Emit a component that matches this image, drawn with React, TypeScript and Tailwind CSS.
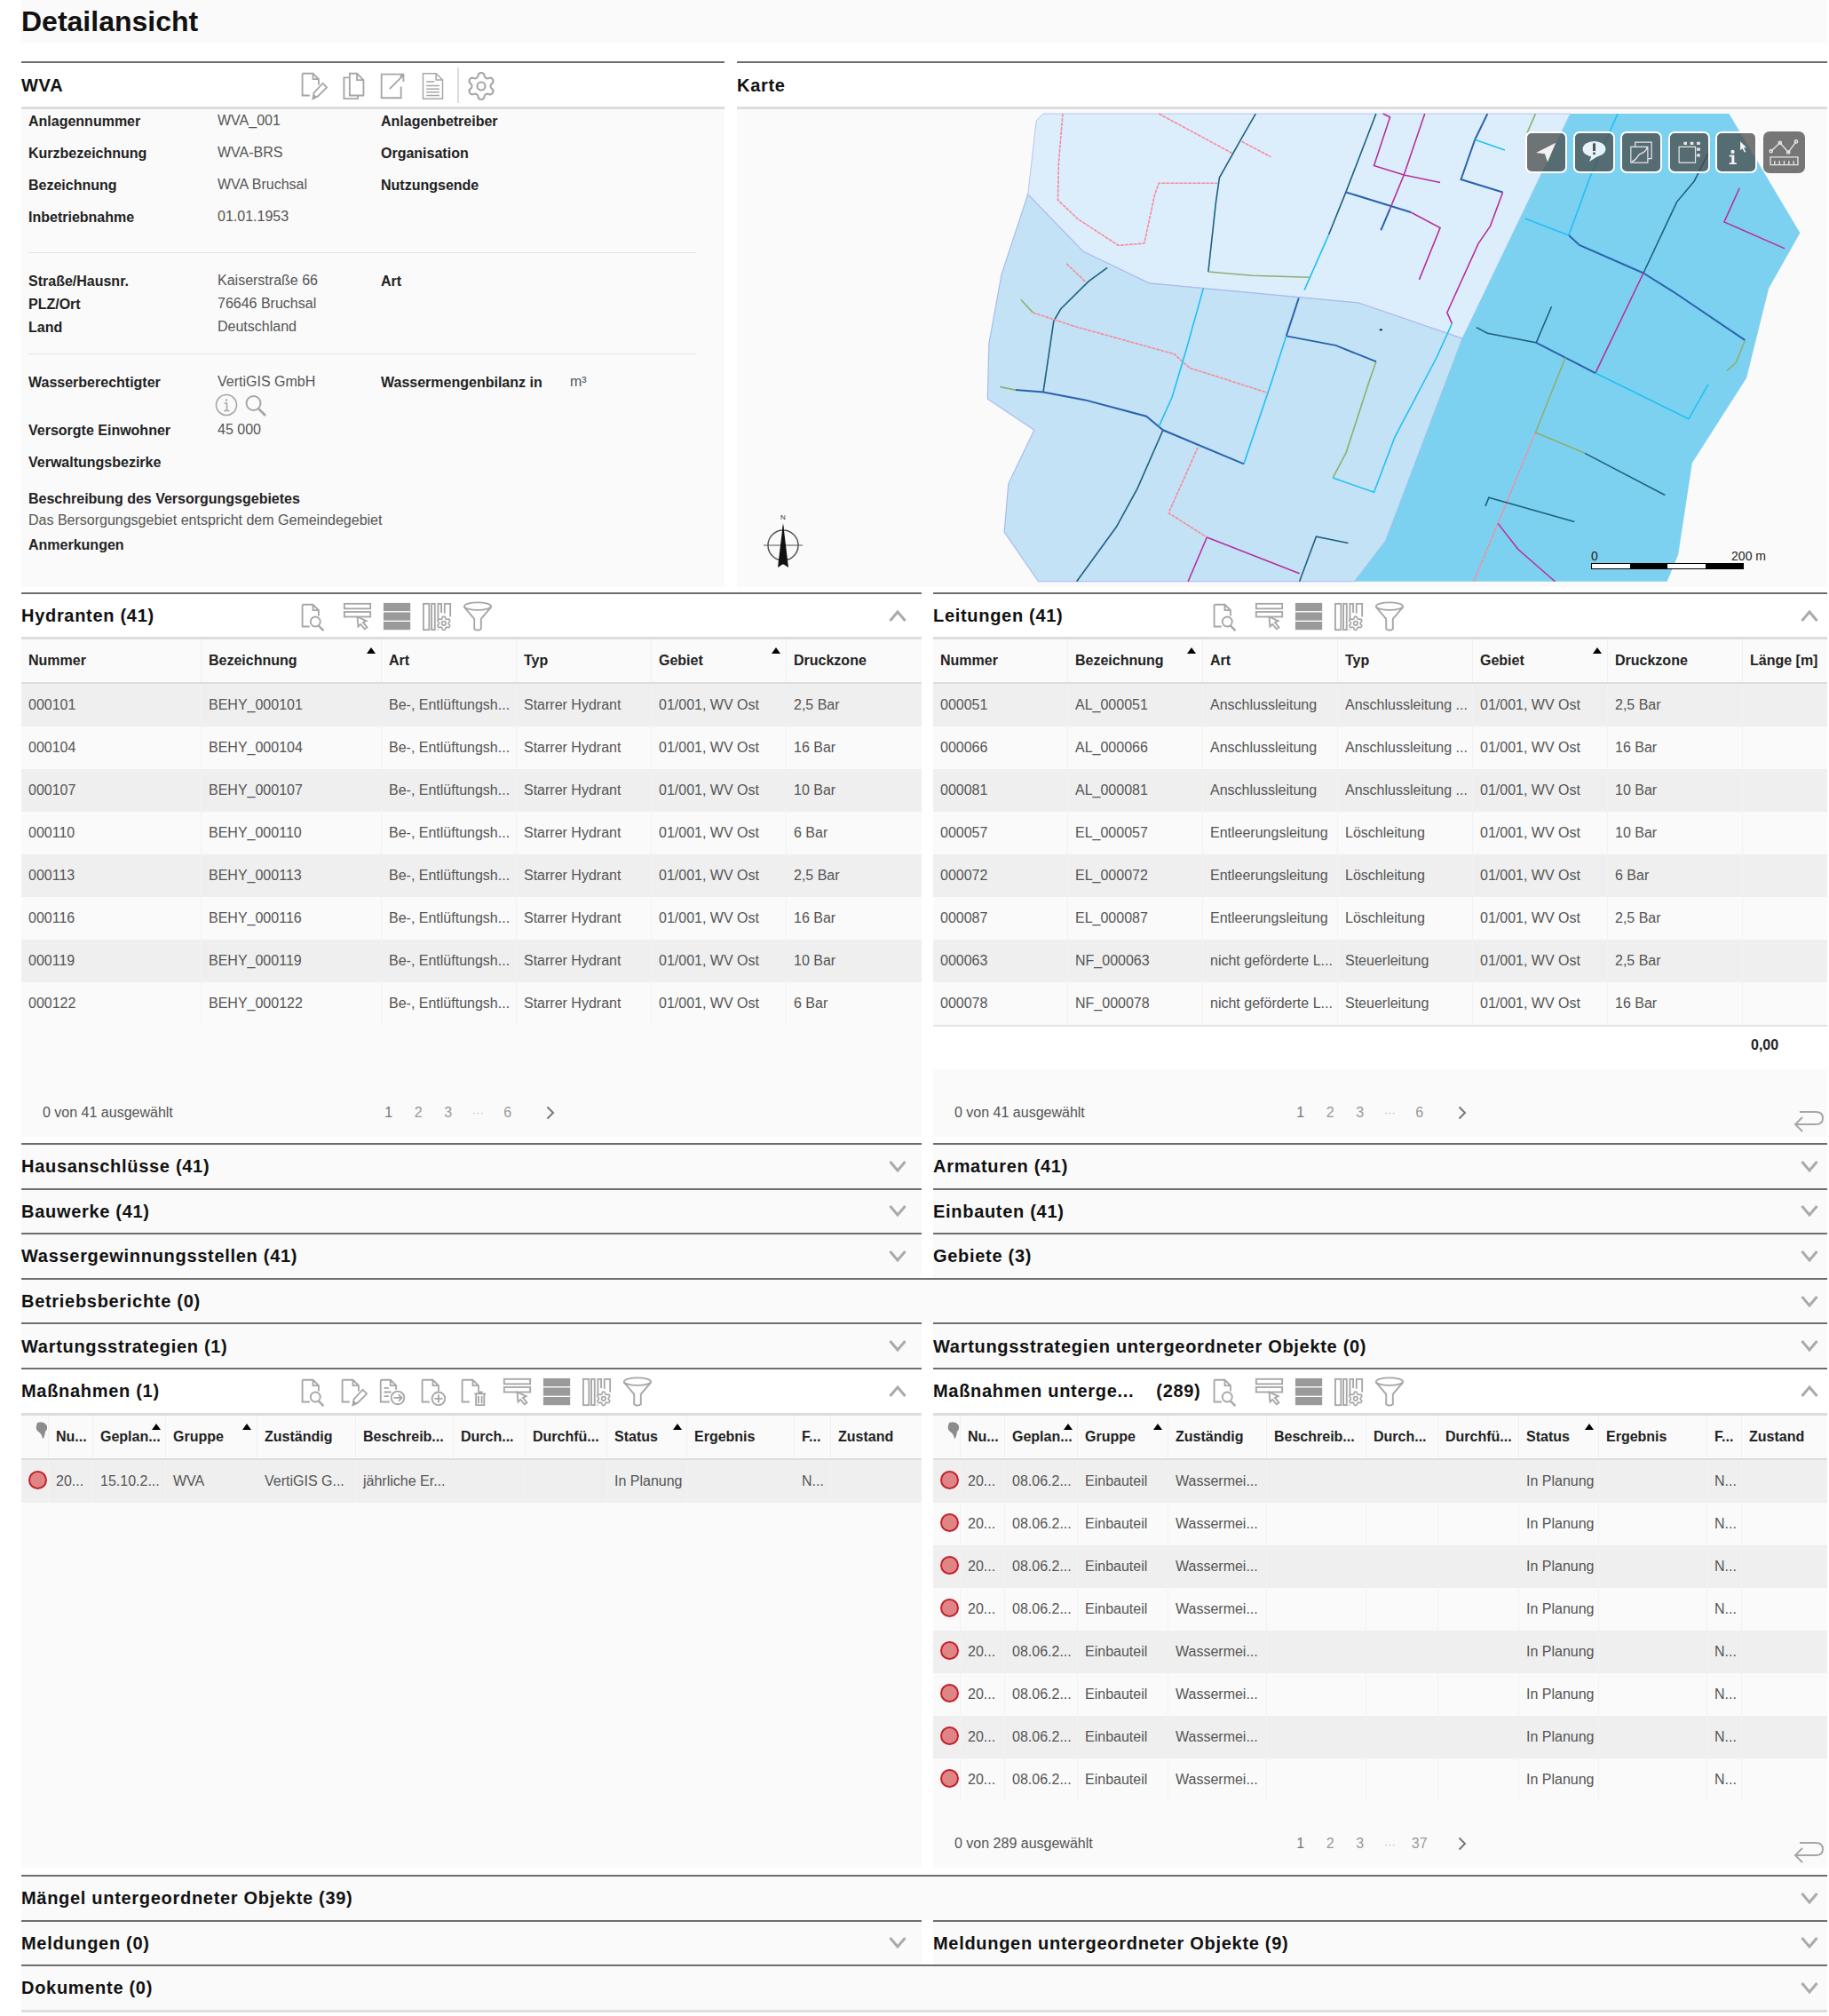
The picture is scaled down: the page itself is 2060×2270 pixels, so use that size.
import React from "react";
import { Settings } from "lucide-react";

const GREY = "#a6a6a6";

type Col = { label: string; w: string; sort?: string };

// icon boxes in the grey toolbar, drawn in a 36x36 box
const Page = () => (
  <path d="M5 3h13l7 7v7M18 3v7h7M5 3v27h9" fill="none" stroke={GREY} strokeWidth="2" />
);

const Svg = ({ children }: { children: React.ReactNode }) => (
  <svg viewBox="0 0 36 36" className="w-[33px] h-[33px]" fill="none" stroke={GREY} strokeWidth="2">
    {children}
  </svg>
);

const DocSearch = () => (
  <Svg>
    <Page />
    <circle cx="21" cy="24" r="6" />
    <path d="M25 29l6 6" strokeWidth="2.5" />
  </Svg>
);
const DocEdit = () => (
  <Svg>
    <Page />
    <path d="M18 34l1-7 11-12 5 5-11 11z" />
    <path d="M18 34l3-4" strokeWidth="3" />
  </Svg>
);
const DocMove = () => (
  <Svg>
    <path d="M3 3h12l7 7v5M15 3v7h7M3 3v27h11M7 13h6M7 18h9M7 23h6" />
    <circle cx="24" cy="25" r="8" />
    <path d="M19 25h10M25 21l4 4-4 4" />
  </Svg>
);
const DocAdd = () => (
  <Svg>
    <Page />
    <circle cx="25" cy="26" r="8" />
    <path d="M25 21v10M20 26h10" />
  </Svg>
);
const DocTrash = () => (
  <Svg>
    <Page />
    <path d="M20 20h14M25 20v-2h4v2M22 20v14h10V20M25 23v9M29 23v9" />
  </Svg>
);
const SelectRow = () => (
  <Svg>
    <rect x="2" y="2" width="32" height="6" />
    <rect x="2" y="12" width="32" height="6" />
    <path d="M18 18l11 5-4 2 5 6-3 2-5-6-3 3z" fill="#fff" />
  </Svg>
);
const RowsSolid = () => (
  <Svg>
    <rect x="1" y="1" width="33" height="10" fill="#9a9a9a" stroke="none" />
    <rect x="1" y="12.5" width="33" height="10" fill="#9a9a9a" stroke="none" />
    <rect x="1" y="24" width="33" height="10" fill="#9a9a9a" stroke="none" />
  </Svg>
);
const ColsGear = () => (
  <Svg>
    <rect x="1" y="2" width="7" height="32" />
    <rect x="11" y="2" width="4" height="32" />
    <path d="M19 22V2h4v11M27 14V2h7v16M19 34h-1" />
    <Settings x={16} y={16} width={20} height={20} strokeWidth={2.2} color={GREY} />
  </Svg>
);
const Funnel = () => (
  <svg viewBox="0 0 36 36" className="w-[34px] h-[34px]" fill="none" stroke={GREY} strokeWidth="2">
    <ellipse cx="18" cy="6" rx="16" ry="4.5" />
    <path d="M2 7l12 14v12q4 3 8 0V21L34 7" />
  </svg>
);
const CopyDoc = () => (
  <Svg>
    <path d="M14 3h9l8 8v19H14zM23 3v8h8M14 8H7v26h17v-4" />
  </Svg>
);
const OpenDoc = () => (
  <Svg>
    <path d="M28 8V4H4v29h24V19M14 22L31 5M22 4h9v9" />
  </Svg>
);
const TextDoc = () => (
  <Svg>
    <path d="M6 3h16l8 8v23H6zM22 3v8h8M10 13h10M10 18h16M10 22h16M10 26h16M10 30h16" strokeWidth="1.6" />
  </Svg>
);

const ChevronUp = () => (
  <svg viewBox="0 0 20 13" className="w-[20px] h-[13px]" fill="none" stroke="#aaaaaa" strokeWidth="3">
    <path d="M1.5 12L10 2l8.5 10" />
  </svg>
);
const ChevronDown = () => (
  <svg viewBox="0 0 20 13" className="w-[20px] h-[13px]" fill="none" stroke="#aaaaaa" strokeWidth="3">
    <path d="M1.5 1L10 11l8.5-10" />
  </svg>
);

const IconBox = ({ children, extra = "" }: { children: React.ReactNode; extra?: string }) => (
  <div className={`w-[45px] flex justify-center shrink-0 ${extra}`}>{children}</div>
);

const basicTools = (
  <>
    <IconBox><DocSearch /></IconBox>
    <IconBox extra="ml-[5px]"><SelectRow /></IconBox>
    <IconBox><RowsSolid /></IconBox>
    <IconBox><ColsGear /></IconBox>
    <IconBox><Funnel /></IconBox>
  </>
);

const editTools = (
  <>
    <IconBox><DocSearch /></IconBox>
    <IconBox><DocEdit /></IconBox>
    <IconBox><DocMove /></IconBox>
    <IconBox><DocAdd /></IconBox>
    <IconBox><DocTrash /></IconBox>
    <IconBox extra="ml-[5px]"><SelectRow /></IconBox>
    <IconBox><RowsSolid /></IconBox>
    <IconBox><ColsGear /></IconBox>
    <IconBox><Funnel /></IconBox>
  </>
);

const Title = ({ children }: { children: React.ReactNode }) => (
  <span className="text-[20px] font-bold tracking-[0.7px] text-[#111] whitespace-pre">{children}</span>
);

const Collapsed = ({ title, right }: { title?: string; right?: boolean }) => (
  <div className={`h-full border-t-2 border-[#6e6e6e] bg-[#fafafa] flex items-center justify-between ${right ? "pr-[10px]" : "pr-[17px]"}`}>
    <Title>{title}</Title>
    <ChevronDown />
  </div>
);

const Row2 = ({ left, right }: { left?: string; right?: string }) => (
  <div className="grid grid-cols-[1014px_1007px] gap-x-[13px] h-[50.6px]">
    <Collapsed title={left} />
    <Collapsed title={right} right />
  </div>
);

// section that runs over both columns
const RowFull = ({ title }: { title: string }) => (
  <div className="h-[50.6px] w-[2034px]">
    <Collapsed title={title} right />
  </div>
);

const SortArrow = ({ pos }: { pos: string }) => (
  <span className={`absolute top-[9px] ${pos} w-0 h-0 border-x-[5px] border-x-transparent border-b-[7px] border-b-black`} />
);

const Pin = () => (
  <svg viewBox="0 0 14 20" className="w-[14px] h-[20px] absolute left-[15px] top-[7px]">
    <path d="M3 1q7-2 10 2t-1 8q-1 7-3 8-1-6-5-8T3 1z" fill="#8c8c8c" />
  </svg>
);

const Dot = () => (
  <span className="block w-[21px] h-[21px] rounded-full bg-[#e08585] border-2 border-[#c4202c] shrink-0 -mt-[2px]" />
);

const Table = ({ cols, rows, pin }: { cols: Col[]; rows: string[][]; pin?: boolean }) => (
  <div className="text-[16px]">
    <div className="flex h-[48px] border-t-[3px] border-b-2 border-[#dddddd] bg-[#fafafa] box-content">
      {cols.map((c, i) => (
        <div
          key={i}
          className={`${c.w} shrink-0 relative flex items-center pl-2 font-bold text-[#222] whitespace-nowrap overflow-visible ${i < cols.length - 1 ? "border-r border-[#f0f0f0]" : ""}`}
        >
          {c.label}
          {c.sort && <SortArrow pos={c.sort} />}
          {pin && i === 0 && <Pin />}
        </div>
      ))}
    </div>
    {rows.map((r, ri) => (
      <div key={ri} className={`flex h-[48px] ${ri % 2 === 0 ? "bg-[#efefef]" : "bg-[#fafafa]"}`}>
        {cols.map((c, i) => (
          <div
            key={i}
            className={`${c.w} shrink-0 flex items-center pl-2 text-[#555] whitespace-nowrap ${i < cols.length - 1 ? "border-r border-[#f2f2f2]" : ""}`}
          >
            {pin && i === 0 ? <Dot /> : r[i]}
          </div>
        ))}
      </div>
    ))}
  </div>
);

const ReturnIcon = () => (
  <svg viewBox="0 0 34 24" className="w-[34px] h-[24px] shrink-0" fill="none" stroke={GREY} strokeWidth="2">
    <path d="M7 1h18q8 0 8 7t-8 7H2M10 7l-8 8 8 8" />
  </svg>
);

const Pagination = ({ text, last, back, size }: { text: string; last: string; back?: boolean; size: string }) => (
  <div className={`${size} bg-[#fafafa] flex items-center pt-[22px] text-[16px] text-[#555]`}>
    <div className="w-[397px] pl-6 whitespace-nowrap">{text}</div>
    {["1", "2", "3", "···", last].map((p, i) => (
      <span
        key={i}
        className={`w-[33.5px] text-center ${i === 0 ? "text-[#777]" : i === 3 ? "text-[#bbb] text-[13px]" : "text-[#999]"}`}
      >
        {p}
      </span>
    ))}
    <svg viewBox="0 0 10 16" className="w-[10px] h-[16px] ml-[26px]" fill="none" stroke="#777" strokeWidth="2">
      <path d="M1.5 1.5L8 8l-6.5 6.5" />
    </svg>
    {back && (
      <div className="ml-auto pr-[4px] pt-[20px]">
        <ReturnIcon />
      </div>
    )}
  </div>
);

const hydrantCols: Col[] = [
  { label: "Nummer", w: "w-[203px]" },
  { label: "Bezeichnung", w: "w-[203px]", sort: "right-[6px]" },
  { label: "Art", w: "w-[152px]" },
  { label: "Typ", w: "w-[152px]" },
  { label: "Gebiet", w: "w-[152px]", sort: "right-[6px]" },
  { label: "Druckzone", w: "w-[152px]" },
];

const leitungCols: Col[] = [
  { label: "Nummer", w: "w-[152px]" },
  { label: "Bezeichnung", w: "w-[152px]", sort: "right-[7px]" },
  { label: "Art", w: "w-[152px]" },
  { label: "Typ", w: "w-[152px]" },
  { label: "Gebiet", w: "w-[152px]", sort: "right-[6px]" },
  { label: "Druckzone", w: "w-[152px]" },
  { label: "Länge [m]", w: "w-[95px]" },
];

const massCols: Col[] = [
  { label: "", w: "w-[31px]" },
  { label: "Nu...", w: "w-[50px]" },
  { label: "Geplan...", w: "w-[82px]", sort: "right-[5px]" },
  { label: "Gruppe", w: "w-[103px]", sort: "right-[6px]" },
  { label: "Zuständig", w: "w-[111px]" },
  { label: "Beschreib...", w: "w-[110px]" },
  { label: "Durch...", w: "w-[81px]" },
  { label: "Durchfü...", w: "w-[92px]" },
  { label: "Status", w: "w-[90px]", sort: "right-[5px]" },
  { label: "Ergebnis", w: "w-[121px]" },
  { label: "F...", w: "w-[41px]" },
  { label: "Zustand", w: "w-[102px]" },
];

const massRightCols: Col[] = [
  { label: "", w: "w-[31px]" },
  { label: "Nu...", w: "w-[50px]" },
  { label: "Geplan...", w: "w-[82px]", sort: "right-[5px]" },
  { label: "Gruppe", w: "w-[102px]", sort: "right-[6px]" },
  { label: "Zuständig", w: "w-[111px]" },
  { label: "Beschreib...", w: "w-[112px]" },
  { label: "Durch...", w: "w-[81px]" },
  { label: "Durchfü...", w: "w-[91px]" },
  { label: "Status", w: "w-[90px]", sort: "right-[5px]" },
  { label: "Ergebnis", w: "w-[122px]" },
  { label: "F...", w: "w-[39px]" },
  { label: "Zustand", w: "w-[96px]" },
];

const druck = ["2,5 Bar", "16 Bar", "10 Bar", "6 Bar", "2,5 Bar", "16 Bar", "10 Bar", "6 Bar"];
const hydrantRows = ["101", "104", "107", "110", "113", "116", "119", "122"].map((n, i) => [
  `000${n}`,
  `BEHY_000${n}`,
  "Be-, Entlüftungsh...",
  "Starrer Hydrant",
  "01/001, WV Ost",
  druck[i],
]);

const leitungRows = [
  ["000051", "AL_000051", "Anschlussleitung", "Anschlussleitung ...", "01/001, WV Ost", "2,5 Bar", ""],
  ["000066", "AL_000066", "Anschlussleitung", "Anschlussleitung ...", "01/001, WV Ost", "16 Bar", ""],
  ["000081", "AL_000081", "Anschlussleitung", "Anschlussleitung ...", "01/001, WV Ost", "10 Bar", ""],
  ["000057", "EL_000057", "Entleerungsleitung", "Löschleitung", "01/001, WV Ost", "10 Bar", ""],
  ["000072", "EL_000072", "Entleerungsleitung", "Löschleitung", "01/001, WV Ost", "6 Bar", ""],
  ["000087", "EL_000087", "Entleerungsleitung", "Löschleitung", "01/001, WV Ost", "2,5 Bar", ""],
  ["000063", "NF_000063", "nicht geförderte L...", "Steuerleitung", "01/001, WV Ost", "2,5 Bar", ""],
  ["000078", "NF_000078", "nicht geförderte L...", "Steuerleitung", "01/001, WV Ost", "16 Bar", ""],
];

const massRow = ["", "20...", "15.10.2...", "WVA", "VertiGIS G...", "jährliche Er...", "", "", "In Planung", "", "N...", ""];
const massRightRow = ["", "20...", "08.06.2...", "Einbauteil", "Wassermei...", "", "", "", "In Planung", "", "N...", ""];

// map lines, coordinates in the viewBox of the map svg
const PINK = "#f78a9c";
const TEAL = "#1f5f80";
const BLUE = "#2b62ad";
const CYAN = "#1fc0f5";
const MAG = "#b82f9c";
const GREEN = "#8cb070";

const mapLines: [string, string][] = [
  [PINK, "468,175 462,320 461,425 490,480 548,556 585,550 600,410 606,376 690,376"],
  [PINK, "606,175 712,290"],
  [PINK, "725,255 767,300"],
  [TEAL, "745,175 725,245 693,360 688,430 677,632"],
  [GREEN, "677,632 740,643 822,648"],
  [TEAL, "918,175 875,400 850,525"],
  [CYAN, "850,525 815,685"],
  [MAG, "928,175 938,185 915,325 958,352 1010,374"],
  [MAG, "988,175 958,352 938,450"],
  [BLUE, "938,450 925,512"],
  [BLUE, "875,402 968,460"],
  [MAG, "968,460 1010,505 980,655"],
  [BLUE, "1078,175 1060,250 1040,365 1100,402"],
  [MAG, "1100,402 1082,500 1065,550 1020,750 1027,782"],
  [CYAN, "1027,782 1005,880 945,1110 915,1270 856,1228"],
  [CYAN, "1060,250 1103,280"],
  [GREEN, "1147,175 1135,230"],
  [GREEN, "856,1228 875,1155 908,950 918,892"],
  [BLUE, "918,892 860,845 789,818"],
  [BLUE, "789,818 807,708"],
  [CYAN, "789,818 768,950 728,1188"],
  [BLUE, "728,1188 612,1090 588,1050 500,1003 440,980 400,974"],
  [GREEN, "400,974 378,965"],
  [TEAL, "440,980 455,775 465,740 505,660 532,620"],
  [PINK, "500,660 473,608"],
  [GREEN, "408,713 425,750"],
  [PINK, "425,750 485,790 628,870 650,910 762,982"],
  [CYAN, "670,680 645,860 625,995 606,1080"],
  [TEAL, "612,1090 575,1260 545,1370 488,1528"],
  [PINK, "662,1140 620,1330 675,1400"],
  [MAG, "675,1400 648,1528"],
  [MAG, "675,1400 808,1505"],
  [TEAL, "808,1528 832,1398 878,1417"],
  [CYAN, "1265,175 1225,360 1195,525"],
  [CYAN, "1132,478 1195,527"],
  [BLUE, "1195,527 1210,555 1302,636"],
  [TEAL, "1395,290 1375,370 1350,430 1302,636"],
  [BLUE, "1302,636 1345,690 1448,830"],
  [MAG, "1302,636 1233,925"],
  [GREEN, "1448,830 1435,895 1422,918"],
  [MAG, "1440,390 1418,488 1505,565"],
  [TEAL, "1062,793 1078,810 1148,837 1170,733"],
  [BLUE, "1148,837 1233,925"],
  [CYAN, "1233,925 1367,1058 1395,958"],
  [GREEN, "1190,880 1147,1097"],
  [PINK, "1147,1097 1093,1360 1058,1528"],
  [GREEN, "1147,1097 1218,1157"],
  [TEAL, "1218,1157 1333,1278"],
  [TEAL, "1075,1310 1080,1285 1203,1355"],
  [MAG, "1093,1360 1122,1435 1175,1528"],
];

const MapBtn = ({ children, plain }: { children: React.ReactNode; plain?: boolean }) => (
  <div className={`w-[47px] h-[47px] rounded-[7px] bg-[#4a4a4a]/75 ${plain ? "" : "border-2 border-white"} overflow-hidden`}>
    <svg viewBox="0 0 140 140" className="w-full h-full" fill="none" stroke="#e6e6e6" strokeWidth="4">
      {children}
    </svg>
  </div>
);

const MapCanvas = () => (
  <svg viewBox="0 162 1566 1382" preserveAspectRatio="none" className="absolute inset-0 w-full h-full">
    <polygon
      points="440,175 430,195 418,408 497,573 592,665 893,722 1042,825 1197,175"
      fill="#dceefc"
      stroke="#b5c6f2"
      strokeWidth="1"
      vectorEffect="non-scaling-stroke"
    />
    <polygon
      points="418,408 380,640 362,840 360,1000 427,1090 390,1245 384,1385 433,1528 887,1528 932,1410 1042,825 893,722 592,665 497,573"
      fill="#c3e2f5"
      stroke="#a9bbef"
      strokeWidth="1.2"
      vectorEffect="non-scaling-stroke"
    />
    <polygon
      points="1197,175 1425,175 1527,520 1482,680 1450,940 1372,1185 1352,1450 1336,1528 887,1528 932,1410 1042,825"
      fill="#7dd1f0"
    />
    {mapLines.map(([color, pts], i) => (
      <polyline
        key={i}
        points={pts}
        fill="none"
        stroke={color}
        strokeWidth={color === BLUE ? 2 : 1.6}
        vectorEffect="non-scaling-stroke"
        strokeDasharray={color === PINK ? "4 1" : undefined}
      />
    ))}
    <ellipse cx="925" cy="800" rx="2" ry="3" fill="#222" />
  </svg>
);

const Field = ({ label, value, h = "h-[36px]" }: { label: string; value?: string; h?: string }) => (
  <div className="contents">
    <div className={`${h} font-bold leading-[26px] text-[#222]`}>{label}</div>
    <div className={`${h} leading-[24px] text-[#555]`}>{value}</div>
  </div>
);

const Hr = ({ extra }: { extra: string }) => <div className={`h-px bg-[#e3e3e3] w-[752px] ${extra}`} />;

const Header = ({ title, tools, right, h = "h-[48px]" }: { title: string; tools?: React.ReactNode; right?: boolean; h?: string }) => (
  <div className={`${h} flex items-center bg-white ${right ? "pr-[10px]" : "pr-[17px]"}`}>
    <div className="w-[306px] shrink-0">
      <Title>{title}</Title>
    </div>
    <div className="flex items-center pt-[2px]">{tools}</div>
    <div className="ml-auto">
      <ChevronUp />
    </div>
  </div>
);

export default function App() {
  return (
    <div className="w-[2060px] min-h-[2270px] bg-white font-['Liberation_Sans',Arial,sans-serif] text-[16px]">
      <div className="h-[48px] ml-6 mr-[2px] bg-[#fafafa] flex items-center">
        <h1 className="text-[32px] font-bold text-[#111]">Detailansicht</h1>
      </div>

      {/* Stammdaten und Karte */}
      <div className="flex gap-[14px] ml-6 mr-[2px] mt-[21px] h-[592px] mb-[6px]">
        <div className="w-[792px] shrink-0 border-t-2 border-[#6e6e6e] flex flex-col">
          <div className="h-[49px] flex items-center border-b-[3px] border-[#dddddd] box-content">
            <div className="w-[306px] shrink-0">
              <Title>WVA</Title>
            </div>
            <div className="flex items-center pt-[2px]">
              <IconBox><DocEdit /></IconBox>
              <IconBox><CopyDoc /></IconBox>
              <IconBox><OpenDoc /></IconBox>
              <IconBox><TextDoc /></IconBox>
            </div>
            <div className="ml-[5px] w-[2px] h-[40px] bg-[#dddddd]" />
            <div className="w-[50px] flex justify-center pt-[2px]">
              <Settings size={36} strokeWidth={1.4} color={GREY} />
            </div>
          </div>
          <div className="flex-1 bg-[#fafafa] px-2 pt-px">
            <div className="grid grid-cols-[213px_184px_213px_1fr]">
              <Field label="Anlagennummer" value="WVA_001" />
              <Field label="Anlagenbetreiber" />
              <Field label="Kurzbezeichnung" value="WVA-BRS" />
              <Field label="Organisation" />
              <Field label="Bezeichnung" value="WVA Bruchsal" />
              <Field label="Nutzungsende" />
              <Field label="Inbetriebnahme" value="01.01.1953" />
            </div>
            <Hr extra="mt-[16px]" />
            <div className="grid grid-cols-[213px_184px_213px_1fr] mt-[19px]">
              <Field label="Straße/Hausnr." value="Kaiserstraße 66" h="h-[26px]" />
              <Field label="Art" h="h-[26px]" />
              <Field label="PLZ/Ort" value="76646 Bruchsal" h="h-[26px]" />
              <div className="col-span-2" />
              <Field label="Land" value="Deutschland" h="h-[26px]" />
            </div>
            <Hr extra="mt-[16px]" />
            <div className="grid grid-cols-[213px_184px_213px_1fr] mt-[19px]">
              <Field label="Wasserberechtigter" value="VertiGIS GmbH" h="h-[25px]" />
              <Field label="Wassermengenbilanz in" value="m³" h="h-[25px]" />
              <div className="h-[29px]" />
              <div className="h-[29px] col-span-3 flex items-start gap-[7px] -ml-[3px]">
                <svg viewBox="0 0 26 26" className="w-[26px] h-[26px]" fill="none" stroke={GREY} strokeWidth="1.6">
                  <circle cx="13" cy="13" r="11.5" />
                  <circle cx="13" cy="7.5" r="1.2" fill={GREY} stroke="none" />
                  <path d="M10.5 11h3v8M10 19.5h6.5" />
                </svg>
                <svg viewBox="0 0 26 26" className="w-[26px] h-[26px]" fill="none" stroke={GREY} strokeWidth="2">
                  <circle cx="10.5" cy="11" r="8" />
                  <path d="M16 17l8 8" strokeWidth="2.6" />
                </svg>
              </div>
              <Field label="Versorgte Einwohner" value="45 000" />
              <div className="col-span-2" />
              <Field label="Verwaltungsbezirke" />
            </div>
            <div className="mt-[5px] h-[24px] font-bold leading-[26px] text-[#222]">Beschreibung des Versorgungsgebietes</div>
            <div className="h-[26px] leading-[26px] text-[#555]">Das Bersorgungsgebiet entspricht dem Gemeindegebiet</div>
            <div className="mt-[2px] h-[26px] font-bold leading-[26px] text-[#222]">Anmerkungen</div>
          </div>
        </div>

        <div className="flex-1 border-t-2 border-[#6e6e6e] flex flex-col">
          <div className="h-[49px] flex items-center border-b-[3px] border-[#dddddd] box-content">
            <Title>Karte</Title>
          </div>
          <div className="flex-1 bg-[#fafafa] relative overflow-hidden">
            <MapCanvas />

            {/* Werkzeuge auf der Karte */}
            <div className="absolute left-[888px] top-[25px] flex gap-[6.5px]">
              <MapBtn>
                <path d="M105 35L33 72l32 4 10 30z" fill="#f2f2f2" stroke="none" />
              </MapBtn>
              <MapBtn>
                <ellipse cx="70" cy="58" rx="42" ry="29" fill="#e6f3fb" stroke="none" />
                <path d="M62 80l-10 24 32-20z" fill="#e6f3fb" stroke="none" />
                <rect x="65" y="37" width="10" height="28" fill="#555" stroke="none" />
                <circle cx="70" cy="74" r="5" fill="#555" stroke="none" />
              </MapBtn>
              <MapBtn>
                <path d="M48 48V33h60v60H94M32 50h62v58H32zM36 104c20-6 20-24 30-28s24-8 26-26" />
              </MapBtn>
              <MapBtn>
                <path d="M33 50h60v58H33z" />
                <path d="M50 32h12v10H50zM74 32h12v10H74zM98 32h12v10H98zM98 54h12v10H98zM98 76h12v10H98z" fill="#e6e6e6" stroke="none" />
              </MapBtn>
              <MapBtn>
                <circle cx="57" cy="68" r="7" fill="#f2f2f2" stroke="none" />
                <path d="M45 80h18v28h8v6H45v-6h8V86h-8z" fill="#f2f2f2" stroke="none" />
                <path d="M85 30l22 22-9 2 7 14-5 2-7-14-8 7z" fill="#f2f2f2" stroke="none" />
              </MapBtn>
              <MapBtn plain>
                <path d="M26 66l30-28 28 32 26-36" />
                <circle cx="26" cy="66" r="5" />
                <circle cx="56" cy="38" r="5" />
                <circle cx="84" cy="70" r="5" />
                <circle cx="110" cy="34" r="5" />
                <path d="M24 86h92v26H24zM38 112V98M54 112V98M70 112V98M86 112V98M102 112V98" />
              </MapBtn>
            </div>

            {/* Nordpfeil */}
            <svg viewBox="0 0 48 62" className="absolute left-[28px] top-[455px] w-[48px] h-[62px]" fill="none" stroke="#555" strokeWidth="1">
              <text x="24" y="7" textAnchor="middle" fontSize="8" fill="#333" stroke="none">N</text>
              <circle cx="24" cy="36" r="17" strokeWidth="1.5" />
              <path d="M2 36h44M24 14v44" />
              <path d="M24 11l-6 50 6-4 6 4z" fill="#111" stroke="none" />
            </svg>

            {/* Maßstab */}
            <div className="absolute left-[962px] top-[495px] w-[176px] text-[14px] text-[#222]">
              <div className="flex justify-between leading-[16px]">
                <span>0</span>
                <span className="-mr-[21px]">200 m</span>
              </div>
              <div className="flex h-[7px] w-[172px] border border-black">
                <div className="flex-1 bg-white" />
                <div className="flex-1 bg-black" />
                <div className="flex-1 bg-white" />
                <div className="flex-1 bg-black" />
              </div>
            </div>
          </div>
        </div>
      </div>

      <div className="ml-6">
        {/* Hydranten / Leitungen */}
        <div className="grid grid-cols-[1014px_1007px] gap-x-[13px] h-[620px]">
          <div className="border-t-2 border-[#6e6e6e] flex flex-col">
            <Header title="Hydranten (41)" tools={basicTools} />
            <Table cols={hydrantCols} rows={hydrantRows} />
            <div className="h-[50px] bg-[#fafafa]" />
            <Pagination text="0 von 41 ausgewählt" last="6" size="h-[76px]" />
          </div>
          <div className="border-t-2 border-[#6e6e6e] flex flex-col">
            <Header title="Leitungen (41)" tools={basicTools} right />
            <Table cols={leitungCols} rows={leitungRows} />
            <div className="h-[50px] border-t-2 border-[#e3e3e3] bg-white flex items-center pl-[921px] pb-[6px] font-bold text-[#222]">
              0,00
            </div>
            <Pagination text="0 von 41 ausgewählt" last="6" back size="h-[76px]" />
          </div>
        </div>

        <Row2 left="Hausanschlüsse (41)" right="Armaturen (41)" />
        <Row2 left="Bauwerke (41)" right="Einbauten (41)" />
        <Row2 left="Wassergewinnungsstellen (41)" right="Gebiete (3)" />
        <RowFull title="Betriebsberichte (0)" />
        <Row2 left="Wartungsstrategien (1)" right="Wartungsstrategien untergeordneter Objekte (0)" />

        {/* Maßnahmen */}
        <div className="grid grid-cols-[1014px_1007px] gap-x-[13px] h-[571px]">
          <div className="border-t-2 border-[#6e6e6e] flex flex-col pb-[8px]">
            <Header title="Maßnahmen (1)" tools={editTools} h="h-[49px]" />
            <Table cols={massCols} rows={[massRow]} pin />
            <div className="flex-1 bg-[#fafafa]" />
          </div>
          <div className="border-t-2 border-[#6e6e6e] flex flex-col pb-[8px]">
            <Header title="Maßnahmen unterge...    (289)" tools={basicTools} right h="h-[49px]" />
            <Table cols={massRightCols} rows={Array.from({ length: 8 }, () => massRightRow)} pin />
            <Pagination text="0 von 289 ausgewählt" last="37" back size="flex-1" />
          </div>
        </div>

        <RowFull title="Mängel untergeordneter Objekte (39)" />
        <Row2 left="Meldungen (0)" right="Meldungen untergeordneter Objekte (9)" />
        <RowFull title="Dokumente (0)" />
        <div className="h-[3px] w-[2034px] bg-[#dddddd]" />
      </div>
    </div>
  );
}
